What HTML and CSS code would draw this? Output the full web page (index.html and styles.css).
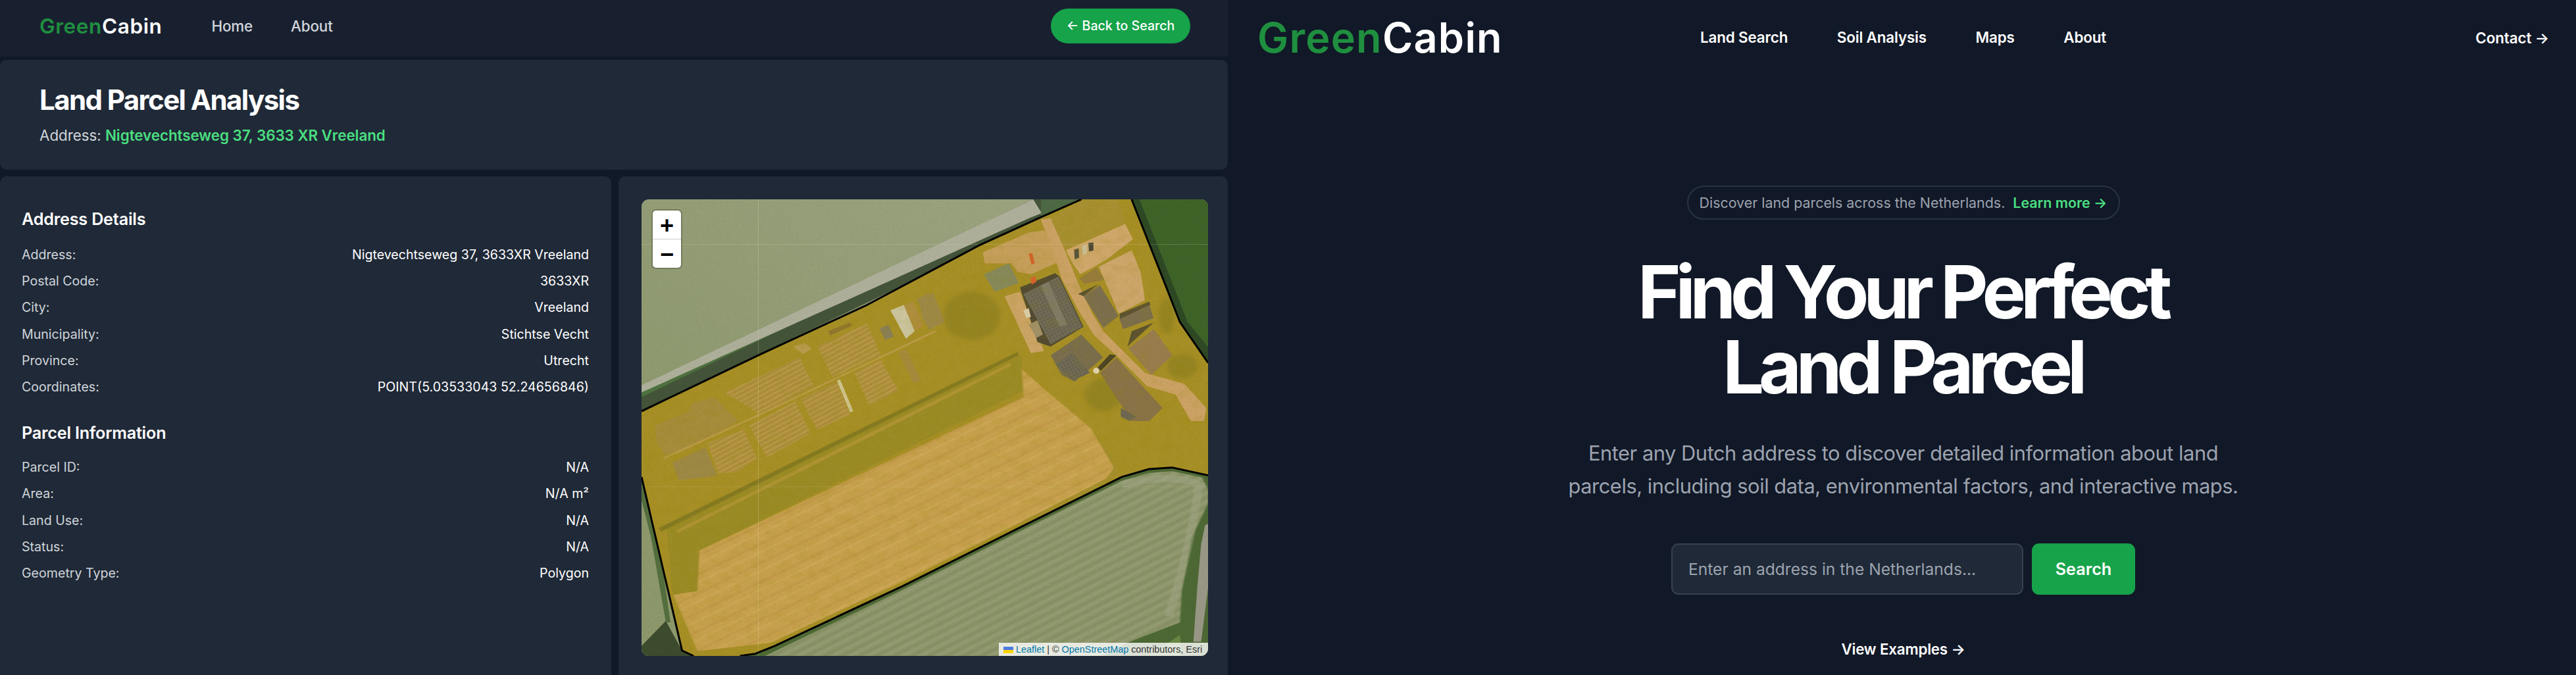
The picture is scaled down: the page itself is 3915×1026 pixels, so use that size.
FILE: index.html
```html
<!DOCTYPE html>
<html lang="en">
<head>
<meta charset="utf-8">
<title>GreenCabin</title>
<link rel="stylesheet" href="styles.css">
</head>
<body>
<div class="split">
  <section class="analysis">
    <nav class="topbar">
      <div class="topbar-left">
        <a class="brand brand-small"><span class="brand-green">Green</span>Cabin</a>
        <a class="topbar-link">Home</a>
        <a class="topbar-link">About</a>
      </div>
      <a class="back-btn">← Back to Search</a>
    </nav>
    <header class="parcel-head">
      <h1>Land Parcel Analysis</h1>
      <p>Address: <strong>Nigtevechtseweg 37, 3633 XR Vreeland</strong></p>
    </header>
    <div class="panels">
      <div class="panel info-panel">
        <h3>Address Details</h3>
        <div class="row"><span>Address:</span><b>Nigtevechtseweg 37, 3633XR Vreeland</b></div>
        <div class="row"><span>Postal Code:</span><b>3633XR</b></div>
        <div class="row"><span>City:</span><b>Vreeland</b></div>
        <div class="row"><span>Municipality:</span><b>Stichtse Vecht</b></div>
        <div class="row"><span>Province:</span><b>Utrecht</b></div>
        <div class="row"><span>Coordinates:</span><b>POINT(5.03533043 52.24656846)</b></div>
        <h3 class="second">Parcel Information</h3>
        <div class="row"><span>Parcel ID:</span><b>N/A</b></div>
        <div class="row"><span>Area:</span><b>N/A m²</b></div>
        <div class="row"><span>Land Use:</span><b>N/A</b></div>
        <div class="row"><span>Status:</span><b>N/A</b></div>
        <div class="row"><span>Geometry Type:</span><b>Polygon</b></div>
      </div>
      <div class="panel map-panel">
        <div class="map">
          <svg class="map-art" viewBox="25 48 1468 1459" preserveAspectRatio="none" aria-hidden="true">
            <defs>
              <linearGradient id="wheat" x1="0" y1="1" x2="1" y2="0">
                <stop offset="0" stop-color="#8b9769"/>
                <stop offset="1" stop-color="#a0a785"/>
              </linearGradient>
              <pattern id="strips" width="20" height="20" patternUnits="userSpaceOnUse" patternTransform="rotate(62)">
                <rect width="20" height="20" fill="#b4933f"/>
                <rect width="4" height="20" fill="#c0a04f"/>
                <rect x="11" width="3" height="20" fill="#a68e38"/>
              </pattern>
              <pattern id="fine" width="10" height="10" patternUnits="userSpaceOnUse" patternTransform="rotate(62)">
                <rect width="10" height="10" fill="#a68f45"/>
                <rect width="3" height="10" fill="#94834a"/>
              </pattern>
              <pattern id="solar" width="15" height="15" patternUnits="userSpaceOnUse" patternTransform="rotate(-28)">
                <rect width="15" height="15" fill="#6a6551"/>
                <rect width="2" height="15" fill="#7f7963"/>
                <rect width="15" height="2" fill="#7f7963"/>
              </pattern>
              <pattern id="furrows" width="24" height="24" patternUnits="userSpaceOnUse" patternTransform="rotate(-32)">
                <rect width="24" height="24" fill="#8f986c"/>
                <rect y="4" width="24" height="4" fill="#868f62"/>
                <rect y="15" width="24" height="5" fill="#989f77"/>
              </pattern>
              <pattern id="long" width="52" height="52" patternUnits="userSpaceOnUse" patternTransform="rotate(-31)">
                <rect width="52" height="52" fill="#cba44f"/>
                <rect y="9" width="52" height="8" fill="#c69d4c"/>
                <rect y="32" width="52" height="6" fill="#d0aa58"/>
              </pattern>
              <filter id="grain" x="0" y="0" width="100%" height="100%">
                <feTurbulence type="fractalNoise" baseFrequency="0.55" numOctaves="3" seed="7"/>
                <feColorMatrix type="matrix" values="0 0 0 0 0  0 0 0 0 0  0 0 0 0 0  1.1 0 0 0 -0.42"/>
              </filter>
              <filter id="mottle" x="0" y="0" width="100%" height="100%">
                <feTurbulence type="fractalNoise" baseFrequency="0.035" numOctaves="4" seed="11"/>
                <feColorMatrix type="matrix" values="0 0 0 0 0.3  0 0 0 0 0.25  0 0 0 0 0  1.8 0 0 0 -0.75"/>
              </filter>
              <filter id="soft"><feGaussianBlur stdDeviation="1.6"/></filter>
              <filter id="softer"><feGaussianBlur stdDeviation="9"/></filter>
              <clipPath id="inside"><polygon points="25,725 330,545 610,385 900,195 1060,105 1165,48 1295,48 1350,220 1420,440 1493,570 1493,930 1400,905 1340,910 1270,935 1000,1100 700,1285 370,1475 320,1500 280,1507 160,1507 130,1490 25,935"/></clipPath>
            </defs>

            <!-- surrounding land -->
            <rect x="25" y="48" width="1468" height="1459" fill="url(#wheat)"/>
            <polygon points="25,725 25,650 1040,48 1165,48" fill="#45553a"/>
            <polygon points="25,680 25,662 1000,92 1035,80" fill="#4f7340"/>
            <polygon points="25,665 25,642 1040,48 1062,92 1030,108" fill="#b1b29c"/>
            <polygon points="1060,48 1165,48 1060,105" fill="#4f6b45"/>
            <polygon points="1295,48 1493,48 1493,570 1420,440 1350,220" fill="#3f6529"/>
            <polygon points="1295,48 1315,48 1370,220 1440,440 1493,520 1493,570 1420,440 1350,220" fill="#2f4a25"/>
            <polygon points="25,935 130,1490 160,1507 25,1507" fill="#8f9a6d"/>
            <polygon points="25,945 65,1100 100,1400 88,1400 50,1130 25,1010" fill="#55703f"/>
            <polygon points="88,1395 130,1490 160,1507 25,1507 25,1475" fill="#3e4d2e"/>
            <polygon points="300,1507 370,1475 700,1285 1000,1100 1270,935 1340,910 1400,905 1493,930 1493,1507" fill="#4f6a35"/>
            <polygon points="345,1507 700,1297 1000,1112 1270,947 1340,922 1400,917 1478,937 1493,975 1493,1020 1450,1130 1425,1300 1420,1400 1290,1462 1215,1507" fill="url(#furrows)" filter="url(#soft)"/>
            <path d="M1270,960 Q1400,920 1470,960 Q1440,1200 1390,1380" fill="none" stroke="#a4a988" stroke-width="22" opacity=".5" filter="url(#soft)"/>
            <polygon points="1485,1090 1493,1085 1493,1290 1475,1462 1455,1462 1465,1290 1475,1150" fill="#9b9a88"/>
            <polygon points="1340,1507 1420,1440 1425,1507" fill="#6b8a45"/>

            <!-- parcel interior -->
            <polygon points="25,725 330,545 610,385 900,195 1060,105 1165,48 1295,48 1350,220 1420,440 1493,570 1493,930 1400,905 1340,910 1270,935 1000,1100 700,1285 370,1475 320,1500 280,1507 160,1507 130,1490 25,935" fill="#aa9227"/>
            <g clip-path="url(#inside)">
              <polygon points="90,1095 1010,545 1015,660 175,1170 170,1300 105,1310" fill="#9e8e27"/>
              <polygon points="175,1170 1015,680 1010,590 1055,640 1190,780 1250,905 1230,940 1000,1085 700,1270 360,1465 170,1492 108,1312 170,1300" fill="url(#long)" filter="url(#soft)"/>
              <polygon points="1000,1085 1230,940 1250,905 1190,780 1240,860 1260,930 1060,1070" fill="#a8912d"/>
              <g filter="url(#soft)">
                <polygon points="70,1098 1000,535 1002,547 75,1110" fill="#877b22"/>
                <polygon points="115,1105 980,570 983,580 118,1115" fill="#b39736"/>
              </g>

              <!-- garden plots, drawn over the crop's own coordinates -->
              <g transform="translate(25.6,336) scale(.568,.7007)">
                <g filter="url(#soft)">
                  <polygon points="60,620 210,560 230,520 330,490 440,600 300,680 110,760 70,700" fill="#a98f3e"/>
                  <polygon points="800,260 1030,155 1090,300 870,400" fill="url(#strips)"/>
                  <polygon points="380,470 720,310 785,440 540,570" fill="url(#strips)"/>
                  <polygon points="490,620 700,510 770,655 570,765" fill="url(#strips)"/>
                  <polygon points="725,500 890,420 950,570 800,640" fill="url(#strips)"/>
                  <polygon points="970,380 1090,320 1170,460 1040,530" fill="url(#strips)"/>
                  <polygon points="300,700 465,640 525,770 440,830 350,840" fill="url(#strips)"/>
                  <polygon points="140,790 290,720 345,850 170,870" fill="url(#fine)"/>
                  <polygon points="1170,285 1205,270 1275,415 1240,430" fill="#a98c3c"/>
                  <polygon points="850,190 950,150 960,165 860,210" fill="#94792e"/>
                  <polygon points="690,260 745,245 775,270 735,295" fill="#bd9e50"/>
                  <polygon points="1195,70 1240,55 1285,165 1245,190" fill="#b3913f"/>
                  <polygon points="1255,45 1310,15 1380,150 1310,185" fill="url(#fine)"/>
                  <polygon points="1085,180 1125,160 1150,215 1110,230" fill="#8d8258"/>
                </g>
                <polyline points="100,770 540,570 1340,190" fill="none" stroke="#c09d4a" stroke-width="8"/>
                <polygon points="890,415 905,410 965,555 950,560" fill="#d3c78f"/>
                <polygon points="1135,95 1195,70 1245,190 1205,225" fill="#cfc8a0"/>
              </g>

              <!-- farmyard, drawn over the crop's own coordinates -->
              <g transform="translate(750,42) scale(.568,.7007)">
                <g filter="url(#softer)" fill="#8c8020" opacity=".6">
                  <ellipse cx="230" cy="540" rx="130" ry="110"/>
                  <ellipse cx="830" cy="900" rx="85" ry="75"/>
                  <ellipse cx="1190" cy="770" rx="70" ry="55"/>
                  <ellipse cx="1120" cy="540" rx="35" ry="80"/>
                </g>
                <g filter="url(#soft)">
                  <polygon points="570,110 730,10 900,10 930,110 660,240" fill="#ab9230"/>
                  <polygon points="690,300 660,240 930,120 965,190 850,280 800,310 725,350" fill="#d3aa6c"/>
                  <polygon points="810,315 960,240 1000,340 1010,400 1020,470 900,530" fill="#d0a96c"/>
                  <polygon points="280,250 490,160 560,150 640,290 500,350 440,340 410,300 290,300" fill="#c9a25c"/>
                  <polygon points="545,100 590,95 650,230 720,400 780,530 830,610 920,700 1020,800 1200,850 1300,960 1290,1020 1230,1020 1160,900 1030,860 900,730 790,630 720,520 640,370 590,220" fill="#cfa566"/>
                  <polygon points="380,450 450,430 560,700 500,710" fill="#d0a868"/>
                  <polygon points="720,370 800,320 835,375 745,395" fill="#9a7e3c"/>
                  <polygon points="285,350 400,300 445,390 335,430" fill="#8a8c5c"/>
                  <polygon points="450,410 610,345 630,360 740,590 590,680 530,660" fill="#544e33"/>
                  <polygon points="465,440 625,360 735,590 590,670" fill="url(#solar)"/>
                  <polygon points="545,400 580,385 665,580 630,590" fill="#827d67"/>
                  <polygon points="490,580 530,560 555,625 525,640" fill="#a5936a"/>
                  <polygon points="465,515 490,505 500,545 480,550" fill="#dcd0a8"/>
                  <polygon points="715,440 810,395 740,450" fill="#5f5530"/>
                  <polygon points="740,450 815,400 900,540 830,595" fill="#7f7150"/>
                  <polygon points="905,530 1040,475 1045,490 905,555" fill="#5f5530"/>
                  <polygon points="905,555 1040,490 1060,550 920,600" fill="#7f7150"/>
                  <polygon points="960,610 1060,570 940,680" fill="#5f5530"/>
                  <polygon points="945,690 1060,600 1145,720 1050,810" fill="#9c7f50"/>
                  <polygon points="590,720 730,625 830,730 700,840 640,810" fill="#7c7050"/>
                  <polygon points="610,760 690,710 770,800 690,835" fill="url(#solar)"/>
                  <polygon points="800,780 860,715 890,720 820,790" fill="#4f4726"/>
                  <polygon points="815,800 890,730 1100,960 1040,1020 960,1020" fill="#8c7548"/>
                  <polygon points="910,960 980,1000 950,1020 910,1000" fill="#6f6a52"/>
                  <polygon points="0,470 55,435 105,565 35,600 0,540" fill="url(#fine)"/>
                </g>
                <polygon points="490,258 505,252 518,300 503,306" fill="#d9642c"/>
                <polygon points="498,368 520,358 525,385 503,397" fill="#d9642c"/>
                <polygon points="697,238 718,232 720,275 700,282" fill="#5a553e"/>
                <polygon points="733,222 755,216 755,258 735,262" fill="#cfc59e"/>
                <polygon points="762,208 785,205 785,242 765,246" fill="#4e4a36"/>
                <ellipse cx="798" cy="790" rx="14" ry="14" fill="#e4d7ad"/>
              </g>
              <rect x="25" y="48" width="1468" height="1459" filter="url(#mottle)" opacity=".18"/>
            </g>

            <!-- imagery grain and tile seams -->
            <rect x="25" y="48" width="1468" height="1459" filter="url(#grain)" opacity=".16"/>
            <rect x="327" y="48" width="1.4" height="1459" fill="#e8e6c0" opacity=".3"/>
            <rect x="25" y="191" width="1468" height="1" fill="#e8e6c0" opacity=".4"/>
            <rect x="25" y="966" width="1468" height="1" fill="#e8e6c0" opacity=".3"/>

            <!-- parcel outline -->
            <polyline class="parcel-line" points="25,725 330,545 610,385 900,195 1060,105 1165,48"/>
            <polyline class="parcel-line" points="1295,48 1350,220 1382,320 1420,440 1493,570"/>
            <polyline class="parcel-line" points="1493,930 1400,905 1340,910 1270,935 1000,1100 700,1285 370,1475 320,1500 280,1507"/>
            <polyline class="parcel-line" points="25,935 130,1490 160,1507"/>
          </svg>
          <div class="zoom-control">
            <span class="zoom-btn">+</span>
            <span class="zoom-btn">−</span>
          </div>
          <div class="attribution">
            <svg class="flag" viewBox="0 0 12 8" aria-hidden="true"><rect width="12" height="4" fill="#4c7be1"/><rect y="4" width="12" height="4" fill="#ffd500"/></svg>
            <a>Leaflet</a> <span class="sep">|</span> © <a>OpenStreetMap</a> contributors, Esri
          </div>
        </div>
      </div>
    </div>
  </section>

  <section class="landing">
    <nav class="landing-nav">
      <a class="brand brand-large"><span class="brand-green">Green</span>Cabin</a>
      <div class="landing-links">
        <a>Land Search</a>
        <a>Soil Analysis</a>
        <a>Maps</a>
        <a>About</a>
      </div>
      <a class="contact">Contact →</a>
    </nav>
    <main class="hero">
      <div class="pill">Discover land parcels across the Netherlands. <strong>Learn more →</strong></div>
      <h1>Find Your Perfect<br>Land Parcel</h1>
      <p>Enter any Dutch address to discover detailed information about land<br>parcels, including soil data, environmental factors, and interactive maps.</p>
      <form class="search">
        <input class="search-input" type="text" placeholder="Enter an address in the Netherlands...">
        <button class="search-btn" type="button">Search</button>
      </form>
      <a class="examples">View Examples →</a>
    </main>
  </section>
</div>
</body>
</html>
```

FILE: styles.css
```css
* { box-sizing: border-box; }
html, body { margin: 0; height: 1026px; overflow: hidden; }
body { background: #111827; color: #fff; font-family: Inter, "Liberation Sans", sans-serif; }

.split { display: flex; width: 3915px; height: 1026px; }

.analysis { width: 1866px; flex: none; display: flex; flex-direction: column; }
.landing { flex: 1; min-width: 0; display: flex; flex-direction: column; }

.brand { font-weight: 600; white-space: nowrap; }
.brand-green { color: #1f8f3f; }
.brand-small { font-size: 31.5px; letter-spacing: .6px; }
.brand-large { font-size: 63px; letter-spacing: 1.2px; line-height: 1; }

.topbar { height: 86px; flex: none; background: #182030; display: flex; align-items: center; justify-content: space-between; padding: 0 57px 8px 60px; }
.topbar-left { display: flex; align-items: center; }
.topbar-left .brand { margin-right: 75px; }
.topbar-link { font-size: 22.4px; font-weight: 500; color: #d1d5db; margin-right: 58px; letter-spacing: -.15px; }
.back-btn { height: 53px; width: 212px; border-radius: 27px; background: #16a34a; display: flex; align-items: center; justify-content: center; font-size: 19.6px; font-weight: 500; }

.parcel-head { margin-top: 5px; height: 167px; flex: none; background: #1f2937; border-radius: 10px; padding: 33px 60px 0; }
.parcel-head h1 { margin: 0; font-size: 42px; line-height: 56px; font-weight: 700; letter-spacing: -1.6px; }
.parcel-head p { margin: 12px 0 0; font-size: 22.4px; line-height: 28px; color: #d1d5db; letter-spacing: -.05px; }
.parcel-head strong { color: #4ade80; font-weight: 600; }

.panels { margin-top: 10px; flex: 1; min-height: 0; display: grid; grid-template-columns: 929px 926px; column-gap: 11px; }
.panel { background: #1f2937; border-radius: 10px 10px 0 0; overflow: hidden; }

.info-panel { padding: 49px 34px 0 33px; }
.info-panel h3 { margin: 0 0 18px; font-size: 25.2px; line-height: 32px; font-weight: 600; letter-spacing: -.2px; }
.info-panel h3.second { margin: 34px 0 16px; }
.row { height: 40.2px; display: flex; align-items: center; justify-content: space-between; font-size: 19.6px; color: #d1d5db; }
.row b { font-weight: 400; color: #fff; }

.map-panel { padding: 35px 30px 0 35px; }
.map { position: relative; width: 861px; height: 694px; border-radius: 11px; overflow: hidden; }
.map-art { display: block; width: 100%; height: 100%; }
.parcel-line { fill: none; stroke: #000; stroke-width: 3px; vector-effect: non-scaling-stroke; stroke-linejoin: round; }

.zoom-control { position: absolute; top: 17px; left: 17px; width: 43px; height: 87px; background: #fff; border-radius: 5px; box-shadow: 0 0 0 2px rgba(0,0,0,.2); display: flex; flex-direction: column; }
.zoom-btn { flex: 1; display: flex; align-items: center; justify-content: center; padding-top: 3px; color: #000; font-family: "Liberation Sans", sans-serif; font-weight: 700; font-size: 36px; line-height: 1; }
.zoom-btn:first-child { border-bottom: 1px solid #ccc; }

.attribution { position: absolute; right: 0; bottom: 0; height: 20px; width: 318px; padding-left: 7px; background: rgba(255,255,255,.8); color: #333; font-family: "Liberation Sans", sans-serif; font-size: 14.4px; line-height: 20px; white-space: nowrap; }
.attribution a { color: #0078a8; }
.attribution .sep { color: #333; }
.flag { width: 15px; height: 10px; vertical-align: -1px; }

.landing-nav { height: 114px; flex: none; position: relative; display: flex; align-items: center; justify-content: space-between; padding: 0 41px 0 45px; }
.landing-links { display: flex; gap: 74.6px; font-size: 22.4px; font-weight: 600; letter-spacing: -.15px; position: absolute; left: 718px; top: 41px; line-height: 32px; }
.contact { font-size: 22.4px; font-weight: 600; letter-spacing: -.1px; }

.hero { display: flex; flex-direction: column; align-items: center; padding: 168px 0 0 4px; }
.pill { height: 52px; width: 658px; border: 2px solid #2a3342; border-radius: 26px; display: flex; align-items: center; justify-content: center; gap: .28em; font-size: 21.4px; color: #9ca3af; white-space: pre; }
.pill strong { color: #4ade80; font-weight: 600; }
.hero h1 { margin: 52px 0 0 -3px; font-size: 112px; line-height: 114px; font-weight: 700; letter-spacing: -8.3px; text-align: center; }
.hero p { margin: 50px 0 0; font-size: 30.8px; line-height: 50px; letter-spacing: -.45px; color: #9ca3af; text-align: center; white-space: nowrap; }
.search { margin-top: 62px; display: flex; gap: 13px; }
.search-input { width: 535px; height: 78px; background: #1f2937; border: 2px solid #374151; border-radius: 11px; padding: 0 24px; font: 400 24.6px Inter, sans-serif; color: #fff; outline: none; }
.search-input::placeholder { color: #9ca3af; opacity: 1; }
.search-btn { width: 157px; height: 78px; background: #16a34a; border: 0; border-radius: 11px; color: #fff; font: 600 25.2px Inter, sans-serif; }
.examples { margin-top: 67px; font-size: 22.4px; line-height: 32px; font-weight: 600; letter-spacing: -.2px; }
```
